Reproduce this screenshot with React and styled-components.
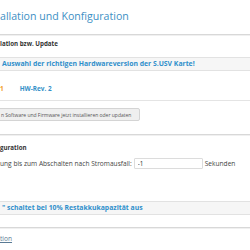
import React from "react";
import styled, { createGlobalStyle } from "styled-components";

const Global = createGlobalStyle`
  html, body { margin: 0; padding: 0; background: #fff; }
  body { font-family: "Open Sans", "DejaVu Sans", sans-serif; color: #444; overflow: hidden; }
`;

const Page = styled.div`
  width: 250px;
  height: 250px;
  overflow: hidden;
`;

const Title = styled.h1`
  margin: 0;
  box-sizing: border-box;
  height: 35px;
  padding-top: 9px;
  font-size: 10.6px;
  line-height: 14px;
  font-weight: 400;
  color: #3d8fc4;
  border-bottom: 1px solid #d8d8d8;
  box-shadow: 0 1px 0 #f0f0f0;
`;

const SectionHead = styled.div`
  font-size: 6.2px;
  font-weight: 700;
  color: #333;
  line-height: 8px;
  padding: ${(p) => p.$pad || "5px 0"};
`;

const Notice = styled.div`
  background: #f6f6f6;
  border-top: 1px solid #e2e2e2;
  border-bottom: 1px solid #e2e2e2;
  font-size: 6.85px;
  font-weight: 700;
  color: #2f8fcb;
  line-height: 12px;
  padding: 0 0 0 2px;
  white-space: nowrap;
  margin-top: ${(p) => p.$mt || "0"};
`;

const RevRow = styled.div`
  display: flex;
  align-items: center;
  gap: 16px;
  height: 24px;
  margin-top: 5px;
  border-bottom: 1px solid #e4e4e4;
  font-size: 6.4px;
  font-weight: 700;
`;

const Rev = styled.span`
  color: ${(p) => (p.$active ? "#f29b25" : "#3490c8")};
`;

const ButtonRow = styled.div`
  padding: 7px 0 13px 0;
  border-bottom: 1px solid #d8d8d8;
  box-shadow: 0 1px 0 #f0f0f0;
`;

const Button = styled.button`
  display: block;
  margin: 0 0 0 -4px;
  width: 144px;
  height: 13px;
  background: #efefef;
  border: 1px solid #d4d4d4;
  border-radius: 2px;
  font-family: inherit;
  font-size: 5px;
  color: #555;
  padding: 0 0 0 4px;
  text-align: left;
  white-space: nowrap;
`;

const FieldRow = styled.div`
  display: flex;
  align-items: center;
  gap: 2px;
  font-size: 6.6px;
  color: #444;
  padding: 6px 0 0 0;
  white-space: nowrap;
`;

const Input = styled.input`
  width: 69px;
  height: 11px;
  box-sizing: border-box;
  border: 1px solid #dcdcdc;
  border-radius: 1px;
  font-family: inherit;
  font-size: 6.4px;
  padding: 0 3px;
  color: #333;
`;

const Footer = styled.div`
  margin-top: 12px;
  border-top: 1px solid #d8d8d8;
  box-shadow: inset 0 1px 0 #f0f0f0;
  padding-top: 6px;
  font-size: 6.6px;
  line-height: 9px;
`;

const Link = styled.a`
  color: #5a7a94;
  text-decoration: underline;
`;

export default function App() {
  return (
    <Page>
      <Global />
      <Title>allation und Konfiguration</Title>
      <SectionHead $pad="5px 0 9px 0">lation bzw. Update</SectionHead>
      <Notice> Auswahl der richtigen Hardwareversion der S.USV Karte!</Notice>
      <RevRow>
        <Rev $active>1</Rev>
        <Rev>HW-Rev. 2</Rev>
      </RevRow>
      <ButtonRow>
        <Button>n Software und Firmware jetzt installieren oder updaten</Button>
      </ButtonRow>
      <SectionHead $pad="9px 0 0 0">guration</SectionHead>
      <FieldRow>
        <span>ung bis zum Abschalten nach Stromausfall:</span>
        <Input defaultValue="-1" />
        <span>Sekunden</span>
      </FieldRow>
      <Notice $mt="32px">" schaltet bei 10% Restakkukapazität aus</Notice>
      <Footer>
        <Link href="#">tion</Link>
      </Footer>
    </Page>
  );
}
